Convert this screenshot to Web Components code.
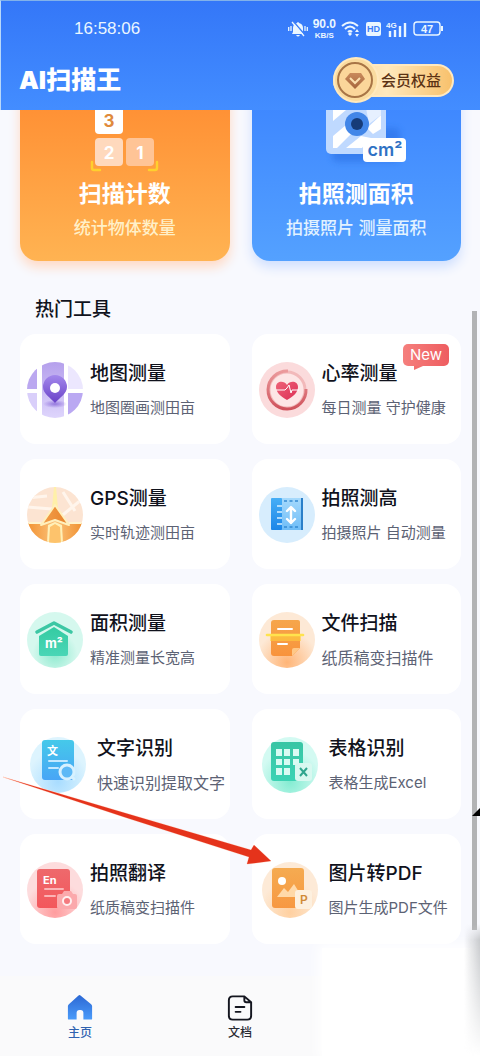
<!DOCTYPE html>
<html lang="zh-CN">
<head>
<meta charset="utf-8">
<meta name="viewport" content="width=device-width, initial-scale=1">
<title>AI扫描王</title>
<style>
  body {
    margin: 0;
    background: #f8f9fe;
    color: #10121c;
    font-family: Inter, "Noto Sans CJK SC", sans-serif;
  }
</style>
</head>
<body>
<scan-app>
  <app-header slot="header">
    <status-bar slot="status">16:58:06</status-bar>
    AI扫描王
    <vip-button slot="action">会员权益</vip-button>
  </app-header>

  <hero-row slot="hero">
    <hero-card kind="count">扫描计数<span slot="desc">统计物体数量</span></hero-card>
    <hero-card kind="area">拍照测面积<span slot="desc">拍摄照片 测量面积</span></hero-card>
  </hero-row>

  <tool-list>
    <span slot="heading">热门工具</span>
    <tool-card icon="map">地图测量<span slot="desc">地图圈画测田亩</span></tool-card>
    <tool-card icon="heart" badge="New">心率测量<span slot="desc">每日测量 守护健康</span></tool-card>
    <tool-card icon="gps">GPS测量<span slot="desc">实时轨迹测田亩</span></tool-card>
    <tool-card icon="height">拍照测高<span slot="desc">拍摄照片 自动测量</span></tool-card>
    <tool-card icon="area">面积测量<span slot="desc">精准测量长宽高</span></tool-card>
    <tool-card icon="file" large>文件扫描<span slot="desc">纸质稿变扫描件</span></tool-card>
    <tool-card icon="text" wide large>文字识别<span slot="desc">快速识别提取文字</span></tool-card>
    <tool-card icon="table" wide>表格识别<span slot="desc">表格生成Excel</span></tool-card>
    <tool-card icon="translate">拍照翻译<span slot="desc">纸质稿变扫描件</span></tool-card>
    <tool-card icon="pdf" wide>图片转PDF<span slot="desc">图片生成PDF文件</span></tool-card>
  </tool-list>

  <tab-bar slot="tabs">
    <tab-item icon="home" active>主页</tab-item>
    <tab-item icon="doc">文档</tab-item>
  </tab-bar>
</scan-app>

<script>
const toolIcons = {
  map: `
    <defs>
      <clipPath id="c"><circle cx="28" cy="28" r="28"/></clipPath>
      <linearGradient id="a" x2="0" y2="1"><stop stop-color="#b5a0ec"/><stop offset="1" stop-color="#ded5fc"/></linearGradient>
      <linearGradient id="b" x2="0" y2="1"><stop stop-color="#a388ec"/><stop offset="1" stop-color="#6a42c8"/></linearGradient>
      <radialGradient id="s"><stop stop-color="#7a55d2" stop-opacity=".7"/><stop offset="1" stop-color="#7a55d2" stop-opacity="0"/></radialGradient>
    </defs>
    <g clip-path="url(#c)">
      <path fill="#bba8f0" d="M0 0h10v27H0z"/><path fill="#d9cffa" d="M0 31h10v25H0z"/>
      <path fill="url(#a)" d="M15 0h22v56H15z"/>
      <path fill="#ece7fe" d="M41 0h15v27H41z"/><path fill="#baa8f2" d="M41 31h15v25H41z"/>
    </g>
    <ellipse cx="28" cy="42" rx="12" ry="4" fill="url(#s)"/>
    <path fill="url(#b)" d="M28 41C24 36 16 32 16 25a12 12 0 0 1 24 0c0 7-8 11-12 16z"/>
    <circle cx="28" cy="26" r="5" fill="#fff"/>`,
  gps: `
    <defs>
      <clipPath id="c"><circle cx="28" cy="28" r="28"/></clipPath>
      <linearGradient id="a" x2="1"><stop stop-color="#f29232"/><stop offset=".5" stop-color="#fbc27a"/><stop offset="1" stop-color="#f09030"/></linearGradient>
      <linearGradient id="b" x2="1"><stop stop-color="#f3a04c"/><stop offset="1" stop-color="#e8822a"/></linearGradient>
    </defs>
    <g clip-path="url(#c)">
      <path fill="#fce4d2" d="M0 0h56v56H0z"/>
      <path stroke="#fff5ec" stroke-width="3" d="M0 20l25 2M32 31L54 13M0 11l20-2M36 5l12 19"/>
      <path fill="url(#a)" d="M0 36h15l13-3 13 3h15v20H0z"/>
      <path fill="#fff0b8" d="M21 38l7-3 7 3 1 18H20z"/>
      <path fill="#fdc36c" d="M23 40l5-3 5 3 1 16H22z"/>
      <path fill="none" stroke="#fff4ce" stroke-width="2" d="M0 36h14M42 36h14"/>
      <path fill="#fff0a9" d="M27 0h2l2 21h-6z"/>
    </g>
    <path fill="url(#b)" stroke="#fff0bd" stroke-width="2" stroke-linejoin="round" d="M28 18l14 20-14-5-14 5z"/>`,
  heart: `
    <defs>
      <linearGradient id="a" x2="1" y2="1"><stop stop-color="#ee6178"/><stop offset="1" stop-color="#dc3055"/></linearGradient>
      <linearGradient id="b" x2="0" y2="1"><stop stop-color="#eb9a9c"/><stop offset="1" stop-color="#cf525c"/></linearGradient>
    </defs>
    <circle cx="28" cy="28" r="28" fill="#fbdbdc"/>
    <circle cx="28" cy="28" r="18" fill="#fde6e6" stroke="#f2b9ba" stroke-width="3"/>
    <path fill="none" stroke="url(#b)" stroke-width="3" d="M29 9a19 19 0 1 0 18 18"/>
    <path fill="url(#a)" d="M28 38C21 34 17 30 17 25c0-6 8-7 11-2 3-5 11-4 11 2 0 5-4 9-11 13z"/>
    <path fill="none" stroke="#fff" stroke-linejoin="round" d="M17 28h9l2-2 2-3 2 8 1-3h7"/>`,
  height: `
    <defs>
      <linearGradient id="a" x2="0" y2="1"><stop stop-color="#46aef6"/><stop offset="1" stop-color="#1c86e8"/></linearGradient>
      <linearGradient id="b" x2="0" y2="1"><stop stop-color="#a5d9fc"/><stop offset="1" stop-color="#6fbdf7"/></linearGradient>
    </defs>
    <circle cx="28" cy="28" r="28" fill="#d7edfd"/>
    <path fill="url(#b)" d="M22 11h21v32H22z"/>
    <rect x="12" y="11" width="11" height="32" rx="1" fill="url(#a)"/>
    <path stroke="#d7f0ff" stroke-width="1.6" d="M18 19h5M18 25h5M18 31h5M18 37h5"/>
    <path stroke="#358bd2" stroke-width="1.5" stroke-dasharray="3 2.5" d="M25 14h16M25 40h16"/>
    <path stroke="#2b7fc8" stroke-width="2" d="M43 11v32"/>
    <path fill="none" stroke="#fff" stroke-width="2.4" stroke-linejoin="round" stroke-linecap="round" d="M32 21v15M28 24l4-4 4 4M28 32l4 4 4-4"/>`,
  area: `
    <defs>
      <radialGradient id="g" cy=".75"><stop stop-color="#8eeacf"/><stop offset=".8" stop-color="#d5f8ee"/></radialGradient>
      <linearGradient id="a" x2="0" y2="1"><stop stop-color="#34cba2"/><stop offset="1" stop-color="#4ad6b6"/></linearGradient>
    </defs>
    <circle cx="28" cy="28" r="28" fill="url(#g)"/>
    <path fill="none" stroke="#3cc7a4" stroke-width="3.6" stroke-linecap="round" stroke-linejoin="round" d="M10 20l17-9 17 9"/>
    <path fill="url(#a)" d="M12 24l15-9 14 9v18q0 2-2 2H14q-2 0-2-2z"/>
    <text x="18" y="36" font-size="13" font-weight="700" fill="#fff">m²</text>`,
  file: `
    <defs>
      <radialGradient id="g" cy=".9" r=".7"><stop stop-color="#ffb577"/><stop offset=".8" stop-color="#fde9d6"/></radialGradient>
      <linearGradient id="a" x2="0" y2="1"><stop stop-color="#f6a64b"/><stop offset="1" stop-color="#f8933c"/></linearGradient>
    </defs>
    <circle cx="28" cy="28" r="28" fill="url(#g)"/>
    <path fill="url(#a)" d="M15 8h24q2 0 2 2v26l-8 8H15q-3 0-3-3V11q0-3 3-3z"/>
    <path fill="#ffc887" d="M41 36l-8 8v-6q0-2 2-2z"/>
    <path stroke="#fff" stroke-width="2" stroke-linecap="round" d="M19 17h14M19 32h9"/>
    <path fill="#ffce3e" opacity=".6" d="M11 24h31v5H11z"/>
    <path stroke="#ffe34d" stroke-width="2.6" stroke-linecap="round" d="M8 23h36"/>`,
  text: `
    <defs>
      <radialGradient id="g" cy=".8" r=".7"><stop stop-color="#a8dcff"/><stop offset=".8" stop-color="#ddf4fe"/></radialGradient>
      <linearGradient id="a" x2="0" y2="1"><stop stop-color="#45c9ea"/><stop offset="1" stop-color="#48a5f6"/></linearGradient>
    </defs>
    <circle cx="28" cy="28" r="28" fill="url(#g)"/>
    <rect x="12" y="3" width="32" height="40" rx="3" fill="url(#a)"/>
    <text x="17" y="18" font-size="11" font-weight="700" fill="#fff">文</text>
    <path stroke="#c4e9ff" stroke-width="2" stroke-linecap="round" d="M19 24h18M19 31h9"/>
    <circle cx="37" cy="35" r="7" fill="#5db9f6" stroke="#d6f1ff" stroke-width="3"/>
    <path stroke="#d6f1ff" stroke-width="3" stroke-linecap="round" d="M42 40l2 2"/>`,
  table: `
    <defs>
      <radialGradient id="g" cy=".8" r=".7"><stop stop-color="#84ecd2"/><stop offset=".8" stop-color="#d3faf2"/></radialGradient>
      <linearGradient id="a" x2="0" y2="1"><stop stop-color="#38c5a4"/><stop offset="1" stop-color="#3bd3b4"/></linearGradient>
    </defs>
    <circle cx="28" cy="28" r="28" fill="url(#g)"/>
    <rect x="9" y="5" width="32" height="39" rx="3" fill="url(#a)"/>
    <path fill="#d9fbf3" d="M14 12h6v7h-6zM22 12h6v7h-6zM31 12h6v7h-6zM14 22h6v6h-6zM22 22h6v6h-6zM31 22h6v6h-6zM14 31h6v7h-6zM22 31h6v7h-6z"/>
    <rect x="33" y="26" width="17" height="18" rx="3" fill="#d8f8f0"/>
    <path stroke="#30a58e" stroke-width="2" d="M38 31l7 8M45 31l-7 8"/>`,
  translate: `
    <defs>
      <radialGradient id="g" cy=".9" r=".7"><stop stop-color="#ff9c9e"/><stop offset=".8" stop-color="#fddcdd"/></radialGradient>
      <linearGradient id="a" x2="0" y2="1"><stop stop-color="#ee696c"/><stop offset="1" stop-color="#f3575c"/></linearGradient>
    </defs>
    <circle cx="28" cy="28" r="28" fill="url(#g)"/>
    <rect x="10" y="7" width="33" height="39" rx="3" fill="url(#a)"/>
    <text x="16" y="22" font-size="11" font-weight="700" fill="#fff">En</text>
    <path stroke="#fbb3b5" stroke-width="2" stroke-linecap="round" d="M18 27h18M18 34h10"/>
    <path fill="#fba9ac" d="M32 32h3l2-3h7l2 3h2q2 0 2 2v11q0 2-2 2H32q-2 0-2-2V34q0-2 2-2z"/>
    <circle cx="40" cy="39" r="4" fill="#f47a7f" stroke="#fff0f0" stroke-width="2"/>`,
  pdf: `
    <defs>
      <radialGradient id="g" cy=".9" r=".7"><stop stop-color="#ffd0a0"/><stop offset=".8" stop-color="#fdead7"/></radialGradient>
      <linearGradient id="a" x2="0" y2="1"><stop stop-color="#f5ab51"/><stop offset="1" stop-color="#f79842"/></linearGradient>
    </defs>
    <circle cx="28" cy="28" r="28" fill="url(#g)"/>
    <rect x="10" y="6" width="32" height="40" rx="3" fill="url(#a)"/>
    <circle cx="20" cy="19" r="4" fill="#fff"/>
    <path fill="#ffd9a9" d="M15 35l7-9 4 4 6-8 8 13z"/>
    <rect x="33" y="28" width="17" height="19" rx="3" fill="#fdf0df"/>
    <text x="38" y="42" font-size="12" font-weight="600" fill="#d08a37">P</text>`,
};

const heroArt = {
  count: `
    <svg width="72" height="94" viewBox="0 0 72 94">
      <rect x="6" y="26" width="28" height="30" rx="4" fill="#fff"/>
      <rect x="6" y="60" width="28" height="28" rx="4" fill="#ffd9bd"/>
      <rect x="37" y="60" width="28" height="28" rx="4" fill="#ffc496"/>
      <g font-weight="700" font-size="17" text-anchor="middle">
        <text x="20" y="49" fill="#e08a3c">3</text>
        <text x="20" y="81" fill="#fff">2</text>
        <text x="51" y="81" fill="#fff">1</text>
      </g>
      <path fill="none" stroke="#ffd02e" stroke-width="2.4" stroke-linecap="round" d="M3 84v6q0 2 2 2h6M68 84v6q0 2-2 2h-6"/>
    </svg>`,
  area: `
    <svg width="104" height="94" viewBox="-22 0 104 94">
      <defs>
        <clipPath id="t"><rect x="7" y="20" width="48" height="50"/></clipPath>
        <filter id="f" x="-30%" y="-30%" width="160%" height="160%"><feGaussianBlur stdDeviation="3"/></filter>
      </defs>
      <rect x="6" y="50" width="68" height="34" rx="5" fill="#2467dc" opacity=".45" filter="url(#f)"/>
      <rect y="14" width="60" height="62" rx="5" fill="#bfd9ff"/>
      <g clip-path="url(#t)">
        <path fill="#fff" d="M7 20h13v12L7 43zM7 58l13-11 5 9-14 14H7zM20 70l15-12 10 2-9 10zM41 50l14-13v14l-8 5zM46 32h9v-6z"/>
        <path fill="#e6f0ff" d="M40 30h15v7l-12 9z"/>
      </g>
      <circle cx="31" cy="46" r="12" fill="#4286e8"/>
      <circle cx="31" cy="46" r="6" fill="#163b78"/>
      <rect x="37" y="60" width="43" height="24" rx="4" fill="#fff"/>
      <text x="59" y="78" font-size="18" font-weight="600" text-anchor="middle" fill="#2f72c4">cm²</text>
    </svg>`,
};

const tabIcons = {
  home: `
    <defs><linearGradient id="h" x2="0" y2="1"><stop stop-color="#2c68d4"/><stop offset="1" stop-color="#4a9bfa"/></linearGradient></defs>
    <path fill="url(#h)" d="M14 2q1-1 2 0l11 9q1 1 1 2v13q0 1-1 1h-8v-7q0-3-3-3h-1q-3 0-3 3v7H4q-1 0-1-1V13q0-1 1-2z"/>`,
  doc: `
    <path fill="none" stroke="#14161f" stroke-width="2" stroke-linecap="round" stroke-linejoin="round" d="M20 3H8Q4 3 4 7v16q0 4 4 4h15q4 0 4-4V9zM20 3v4q0 2 2 2h5M11 14h9M11 19h5"/>`,
};

class ScanApp extends HTMLElement {
  constructor() {
    super();
    this.attachShadow({ mode: 'open' }).innerHTML = `
    <style>
      :host {
        display: flex;
        flex-direction: column;
        position: relative;
        min-height: 100vh;
        overflow: hidden;
      }

      main {
        flex: 1;
      }

      .thumb {
        position: absolute;
        top: 311px;
        bottom: 126px;
        right: 3px;
        width: 5px;
        background: #b2b3b5;
      }

      .notch {
        position: absolute;
        top: 807px;
        right: 0;
      }

      .fade {
        position: absolute;
        right: 0;
        bottom: 0;
        width: 33%;
        height: 108px;
        background: #fff;
        box-shadow: 0 0 12px 4px #fff;
      }

      .shade {
        position: absolute;
        right: 0;
        bottom: 0;
        width: 16px;
        height: 132px;
        background: linear-gradient(to right, #c8cacd00, #c8cacd);
        -webkit-mask-image: linear-gradient(#0000, #000 12%, #0000);
        mask-image: linear-gradient(#0000, #000 12%, #0000);
      }
    </style>
    <slot name="header"></slot>
    <main>
      <slot name="hero"></slot>
      <slot></slot>
    </main>
    <slot name="tabs"></slot>
    <div class="thumb"></div>
    <svg class="notch" width="8" height="10"><path d="M0 9L8 1v8z"/></svg>
    <div class="fade"></div>
    <div class="shade"></div>
    `;
  }
}

class AppHeader extends HTMLElement {
  constructor() {
    super();
    this.attachShadow({ mode: 'open' }).innerHTML = `
    <style>
      :host {
        display: block;
        position: relative;
        z-index: 1;
        box-sizing: border-box;
        height: 110px;
        border-top: 1px solid #82b2ea;
        border-left: 1px solid #b8d8fa;
        background: linear-gradient(#3477f8, #438dff);
        color: #fff;
      }

      .bar {
        display: flex;
        align-items: center;
        justify-content: space-between;
        padding: 0 26px 0 18px;
      }

      h1 {
        margin: 0;
        font-size: 25px;
        line-height: 46px;
        font-weight: 900;
      }
    </style>
    <slot name="status"></slot>
    <div class="bar">
      <h1><slot></slot></h1>
      <slot name="action"></slot>
    </div>
    `;
  }
}

class StatusBar extends HTMLElement {
  constructor() {
    super();
    this.attachShadow({ mode: 'open' }).innerHTML = `
    <style>
      :host {
        display: flex;
        align-items: center;
        justify-content: space-between;
        height: 56px;
        padding: 0 36px 0 73px;
        font-family: "Liberation Sans", sans-serif;
        font-size: 17px;
        color: #eaf6ff;
      }

      .icons {
        display: flex;
        align-items: center;
        gap: 5px;
      }

      .speed {
        display: flex;
        flex-direction: column;
        align-items: center;
        font-size: 12px;
        line-height: 13px;
        font-weight: 700;
      }

      .speed small {
        font-size: 8px;
        line-height: 10px;
      }

      svg {
        display: block;
        fill: none;
        stroke: currentColor;
      }

      text {
        fill: currentColor;
        stroke: none;
        font-weight: 700;
      }
    </style>
    <time><slot></slot></time>
    <div class="icons">
      <svg width="20" height="18" viewBox="0 0 20 18">
        <path fill="currentColor" stroke="none" d="M4 14l1-2V8q0-4 4-5 1-2 2 0 4 1 4 5v4l1 2zM8 15h4q-2 3-4 0z"/>
        <path stroke="#3a7ef9" stroke-width="1.5" d="M5 1l12 14"/>
        <path stroke-width="1.3" d="M4 2l12 14M.7 7v4M19.3 7v4M3 6v5M17 6v5"/>
      </svg>
      <div class="speed"><span>90.0</span><small>KB/S</small></div>
      <svg width="20" height="18" viewBox="0 0 20 18">
        <path stroke-width="2" d="M1 6q8-7 16 0M4 9q5-5 10 0M7 12q2-2 4 0"/>
        <path fill="currentColor" stroke="none" d="M9 12l2 2-2 2-2-2zM14 12l2-3 2 3zM14 14l2 3 2-3z"/>
      </svg>
      <svg width="15" height="14" viewBox="0 0 15 14">
        <rect width="15" height="14" rx="2" fill="currentColor" stroke="none"/>
        <text x="1" y="10" font-size="9" style="fill:#3a7ef9">HD</text>
      </svg>
      <svg width="22" height="18" viewBox="0 0 22 18">
        <text x="0" y="8" font-size="8">4G</text>
        <path stroke-width="2.4" d="M4 11v6M9 10v7M14 6v11M19 3v14"/>
      </svg>
      <svg width="31" height="16" viewBox="0 0 31 16">
        <rect x="1" y="1" width="26" height="13" rx="3" stroke-width="1.4"/>
        <path stroke-width="2" d="M29 5v5"/>
        <text x="8" y="12" font-size="11">47</text>
      </svg>
    </div>
    `;
  }
}

class VipButton extends HTMLElement {
  constructor() {
    super();
    this.attachShadow({ mode: 'open' }).innerHTML = `
    <style>
      :host {
        display: block;
      }

      button {
        display: flex;
        align-items: center;
        height: 33px;
        margin: 0;
        padding: 0 11px 0 0;
        border: 2px solid #ffe9c0;
        border-left: 0;
        border-radius: 17px;
        background: linear-gradient(to right, #f5cf92, #ffe9bd 45%, #f8c16c);
        color: #5b3214;
        font: 500 15px/28px "Noto Sans CJK SC", sans-serif;
        cursor: pointer;
      }

      svg {
        flex: none;
        margin-right: 2px;
      }
    </style>
    <button type="button">
      <svg width="46" height="46" viewBox="0 0 46 46">
        <defs>
          <linearGradient id="d" x2="0" y2="1"><stop stop-color="#c98a5c"/><stop offset="1" stop-color="#a5653c"/></linearGradient>
        </defs>
        <circle cx="23" cy="23" r="22" fill="#fadb9f" stroke="#ffe9bd" stroke-width="2"/>
        <circle cx="22" cy="23" r="17" fill="#fbd69a" stroke="#a87546" stroke-width="2"/>
        <path fill="url(#d)" d="M17 16h11l4 6-10 10-10-10z"/>
        <path fill="none" stroke="#fbe0b0" stroke-width="2" d="M17 21l5 5 5-5"/>
      </svg>
      <slot></slot>
    </button>
    `;
  }
}

class HeroRow extends HTMLElement {
  constructor() {
    super();
    this.attachShadow({ mode: 'open' }).innerHTML = `
    <style>
      /* the row is scrolled partly behind the header */
      :host {
        display: grid;
        grid-template-columns: 1fr 1fr;
        gap: 22px;
        margin-top: -40px;
        padding: 0 19px 0 20px;
      }
    </style>
    <slot></slot>
    `;
  }
}

class HeroCard extends HTMLElement {
  connectedCallback() {
    const kind = this.getAttribute('kind');
    this.attachShadow({ mode: 'open' }).innerHTML = `
    <style>
      :host {
        --top: #ff9135;
        --bottom: #ffb352;
        --glow: #ffd9c4;
        --desc: #fff0c8;
        display: block;
      }

      :host([kind="area"]) {
        --top: #3f88ff;
        --bottom: #54a1ff;
        --glow: #cfdffe;
        --desc: #e2f2ff;
      }

      a {
        display: flex;
        flex-direction: column;
        align-items: center;
        padding: 8px 0 19px;
        border-radius: 0 0 18px 18px;
        background: linear-gradient(var(--top) 20%, var(--bottom));
        box-shadow: 0 6px 12px var(--glow);
        color: #fff;
        text-decoration: none;
      }

      h2 {
        margin: 5px 0 4px;
        font-size: 23px;
        line-height: 34px;
        font-weight: 700;
      }

      p {
        margin: 0;
        color: var(--desc);
        font-size: 17px;
        line-height: 27px;
        font-weight: 500;
      }
    </style>
    <a href="#${kind}">
      ${heroArt[kind]}
      <h2><slot></slot></h2>
      <p><slot name="desc"></slot></p>
    </a>
    `;
  }
}

class ToolList extends HTMLElement {
  constructor() {
    super();
    this.attachShadow({ mode: 'open' }).innerHTML = `
    <style>
      :host {
        display: block;
        padding: 35px 19px 32px 20px;
      }

      h2 {
        margin: 0 0 10px 15px;
        font-size: 19px;
        line-height: 28px;
        font-weight: 500;
      }

      .grid {
        display: grid;
        grid-template-columns: 1fr 1fr;
        gap: 15px 22px;
        position: relative;
      }

      .arrow {
        position: absolute;
        top: 442px;
        left: -17px;
        pointer-events: none;
      }
    </style>
    <h2><slot name="heading"></slot></h2>
    <div class="grid">
      <slot></slot>
      <svg class="arrow" width="268" height="90" viewBox="0 0 268 90">
        <path fill="#e5331b" stroke="#ffd9cc" stroke-width="1" paint-order="stroke" d="M0 1l122 36 126 37 3-5 17 16-24 3 2-7-125-40z"/>
      </svg>
    </div>
    `;
  }
}

class ToolCard extends HTMLElement {
  connectedCallback() {
    const icon = this.getAttribute('icon');
    const badge = this.getAttribute('badge');
    this.attachShadow({ mode: 'open' }).innerHTML = `
    <style>
      :host {
        display: block;
        position: relative;
      }

      a {
        display: flex;
        align-items: center;
        gap: 7px;
        padding: 27px 0 25px 7px;
        border-radius: 16px;
        background: #fff;
        color: inherit;
        text-decoration: none;
        white-space: nowrap;
      }

      :host([wide]) a {
        gap: 11px;
        padding-left: 10px;
      }

      svg {
        flex: none;
      }

      h3 {
        margin: 0 0 10px;
        font-size: 19px;
        line-height: 26px;
        font-weight: 500;
      }

      p {
        margin: 0;
        color: #5c6274;
        font-size: 15px;
        line-height: 22px;
      }

      :host([large]) p {
        font-size: 16px;
      }

      .badge {
        position: absolute;
        top: 10px;
        right: 12px;
        width: 46px;
        border-radius: 5px;
        background: linear-gradient(to right, #f57f7d, #ee5d60);
        color: #fff;
        font-size: 15px;
        line-height: 22px;
        text-align: center;
      }

      .badge::after {
        content: "";
        position: absolute;
        top: 100%;
        left: 11px;
        border: solid transparent;
        border-width: 0 9px 4px 0;
        border-top: 4px solid #f2706f;
        border-bottom: 0;
      }
    </style>
    <a href="#${icon}">
      <svg width="56" height="56" viewBox="0 0 56 56">${toolIcons[icon]}</svg>
      <div>
        <h3><slot></slot></h3>
        <p><slot name="desc"></slot></p>
      </div>
    </a>
    ${badge ? `<span class="badge">${badge}</span>` : ''}
    `;
  }
}

class TabBar extends HTMLElement {
  constructor() {
    super();
    this.attachShadow({ mode: 'open' }).innerHTML = `
    <style>
      :host {
        display: block;
        background: #fafafb;
      }

      nav {
        display: grid;
        grid-template-columns: repeat(3, 1fr);
        padding: 17px 0 13px;
      }
    </style>
    <nav><slot></slot></nav>
    `;
  }
}

class TabItem extends HTMLElement {
  connectedCallback() {
    const icon = this.getAttribute('icon');
    this.attachShadow({ mode: 'open' }).innerHTML = `
    <style>
      :host {
        display: block;
        color: #2a2c33;
      }

      :host([active]) {
        color: #2f62b0;
      }

      a {
        display: flex;
        flex-direction: column;
        align-items: center;
        color: inherit;
        font-size: 12px;
        line-height: 20px;
        font-weight: 500;
        text-decoration: none;
      }
    </style>
    <a href="#${icon}">
      <svg width="30" height="30" viewBox="0 0 31 30">${tabIcons[icon]}</svg>
      <slot></slot>
    </a>
    `;
  }
}

customElements.define('scan-app', ScanApp);
customElements.define('app-header', AppHeader);
customElements.define('status-bar', StatusBar);
customElements.define('vip-button', VipButton);
customElements.define('hero-row', HeroRow);
customElements.define('hero-card', HeroCard);
customElements.define('tool-list', ToolList);
customElements.define('tool-card', ToolCard);
customElements.define('tab-bar', TabBar);
customElements.define('tab-item', TabItem);
</script>
</body>
</html>
